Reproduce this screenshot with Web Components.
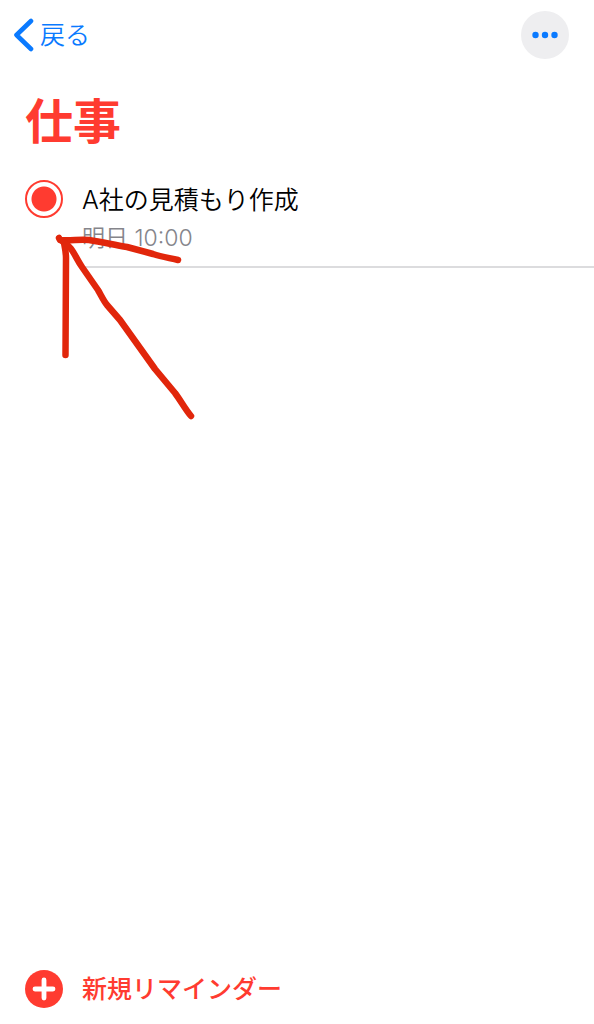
<!DOCTYPE html>
<html lang="ja">
<head>
<meta charset="utf-8">
<meta name="viewport" content="width=device-width, initial-scale=1">
<title>仕事</title>
<style>
    body {
        margin: 0;
        background-color: #fff;
        color: #000;
        font-family: Inter, "Noto Sans CJK JP", sans-serif;
    }
</style>
</head>
<body>
<reminder-app>
    <nav-bar slot="nav">戻る</nav-bar>
    <span slot="title">仕事</span>
    <reminder-item>
        A社の見積もり作成
        <span slot="due">明日 10:00</span>
    </reminder-item>
    <add-button slot="footer">新規リマインダー</add-button>
</reminder-app>

<script>
class ReminderApp extends HTMLElement {
    constructor() {
        super();
        this.attachShadow({ mode: 'open' });
    }

    connectedCallback() {
        this.shadowRoot.innerHTML = `
            <style>
                :host {
                    display: flex;
                    flex-direction: column;
                    min-height: 100vh;
                    --accent: #ff3b30;
                    --link: #0a7aff;
                }

                h1 {
                    margin: 16px 25px;
                    color: var(--accent);
                    font-size: 48px;
                    font-weight: 700;
                    line-height: 72px;
                }

                main {
                    flex-grow: 1;
                }
            </style>
            <slot name="nav"></slot>
            <h1><slot name="title"></slot></h1>
            <main><slot></slot></main>
            <slot name="footer"></slot>
        `;
    }
}

class NavBar extends HTMLElement {
    constructor() {
        super();
        this.attachShadow({ mode: 'open' });
    }

    connectedCallback() {
        this.shadowRoot.innerHTML = `
            <style>
                :host {
                    display: flex;
                    align-items: center;
                    justify-content: space-between;
                    height: 70px;
                    padding: 0 25px 0 12px;
                }

                a {
                    display: flex;
                    align-items: center;
                    gap: 6px;
                    color: var(--link);
                    font-size: 25px;
                    font-weight: 350;
                    line-height: 36px;
                    text-decoration: none;
                }

                button {
                    display: flex;
                    align-items: center;
                    justify-content: center;
                    width: 48px;
                    height: 48px;
                    padding: 0;
                    border: none;
                    border-radius: 50%;
                    background-color: #eeeef0;
                    cursor: pointer;
                }

                svg {
                    display: block;
                    fill: var(--link);
                }

                .chevron {
                    fill: none;
                    stroke: var(--link);
                    stroke-width: 4.6;
                    stroke-linecap: round;
                    stroke-linejoin: round;
                }
            </style>
            <a href="#">
                <svg class="chevron" width="22" height="34" viewBox="0 0 22 34" aria-hidden="true">
                    <path d="M19 3 L4.5 17 L19 31"/>
                </svg>
                <slot></slot>
            </a>
            <button type="button" aria-label="その他">
                <svg width="28" height="8" viewBox="0 0 28 8" aria-hidden="true">
                    <circle cx="4.5" cy="4" r="3.2"/>
                    <circle cx="14" cy="4" r="3.2"/>
                    <circle cx="23.5" cy="4" r="3.2"/>
                </svg>
            </button>
        `;
    }
}

class ReminderItem extends HTMLElement {
    constructor() {
        super();
        this.attachShadow({ mode: 'open' });
    }

    connectedCallback() {
        this.shadowRoot.innerHTML = `
            <style>
                :host {
                    display: flex;
                    gap: 19px;
                    position: relative;
                    padding-left: 25px;
                }

                input {
                    appearance: none;
                    flex-shrink: 0;
                    width: 38px;
                    height: 38px;
                    margin: 6px 0;
                    border: 2px solid var(--accent);
                    border-radius: 50%;
                    cursor: pointer;
                }

                input:checked {
                    background: radial-gradient(circle, var(--accent) 12px, transparent 13px);
                }

                .text {
                    flex-grow: 1;
                    padding: 8px 0;
                    border-bottom: 2px solid #dcdcde;
                }

                label {
                    display: block;
                    font-size: 25px;
                    font-weight: 350;
                    line-height: 36px;
                }

                .due {
                    color: #85858b;
                    font-size: 23px;
                    font-weight: 350;
                    line-height: 40px;
                }

                /* hand-drawn arrow pointing at the tick circle */
                .arrow {
                    position: absolute;
                    top: 58px;
                    left: 50px;
                    fill: none;
                    stroke: #e1260b;
                    stroke-width: 6.5;
                    stroke-linecap: round;
                    stroke-linejoin: round;
                    pointer-events: none;
                }
            </style>
            <input type="checkbox" id="done" checked>
            <div class="text">
                <label for="done"><slot></slot></label>
                <div class="due"><slot name="due"></slot></div>
            </div>
            <svg class="arrow" width="150" height="190" viewBox="50 232 150 190" aria-hidden="true">
                <path d="M59 238 L60 240 C70 241 80 239 89 240 C103 242 114 245 127 247 L153 254 C162 257 170 258 178 260"/>
                <path d="M64 243 C65 248 66 252 66 258 L65.5 355"/>
                <path d="M62 241 C73 247 75 257 82 267 L98 290 C101 295 103 300 107 305 L120 320 L140 348 L155 369 L175 393 C181 401 185 409 191 416"/>
            </svg>
        `;
    }
}

class AddButton extends HTMLElement {
    constructor() {
        super();
        this.attachShadow({ mode: 'open' });
    }

    connectedCallback() {
        this.shadowRoot.innerHTML = `
            <style>
                :host {
                    display: block;
                    padding: 0 25px 16px;
                }

                button {
                    display: flex;
                    align-items: center;
                    gap: 19px;
                    padding: 0;
                    border: none;
                    background: none;
                    color: var(--accent);
                    font-family: inherit;
                    font-size: 25px;
                    font-weight: 500;
                    line-height: 36px;
                    cursor: pointer;
                }

                circle {
                    fill: var(--accent);
                }

                path {
                    stroke: #fff;
                    stroke-width: 4.8;
                    stroke-linecap: round;
                }
            </style>
            <button type="button">
                <svg width="38" height="38" viewBox="0 0 38 38" aria-hidden="true">
                    <circle cx="19" cy="19" r="19"/>
                    <path d="M19 10 V28 M10 19 H28"/>
                </svg>
                <slot></slot>
            </button>
        `;
    }
}

customElements.define('reminder-app', ReminderApp);
customElements.define('nav-bar', NavBar);
customElements.define('reminder-item', ReminderItem);
customElements.define('add-button', AddButton);
</script>
</body>
</html>
